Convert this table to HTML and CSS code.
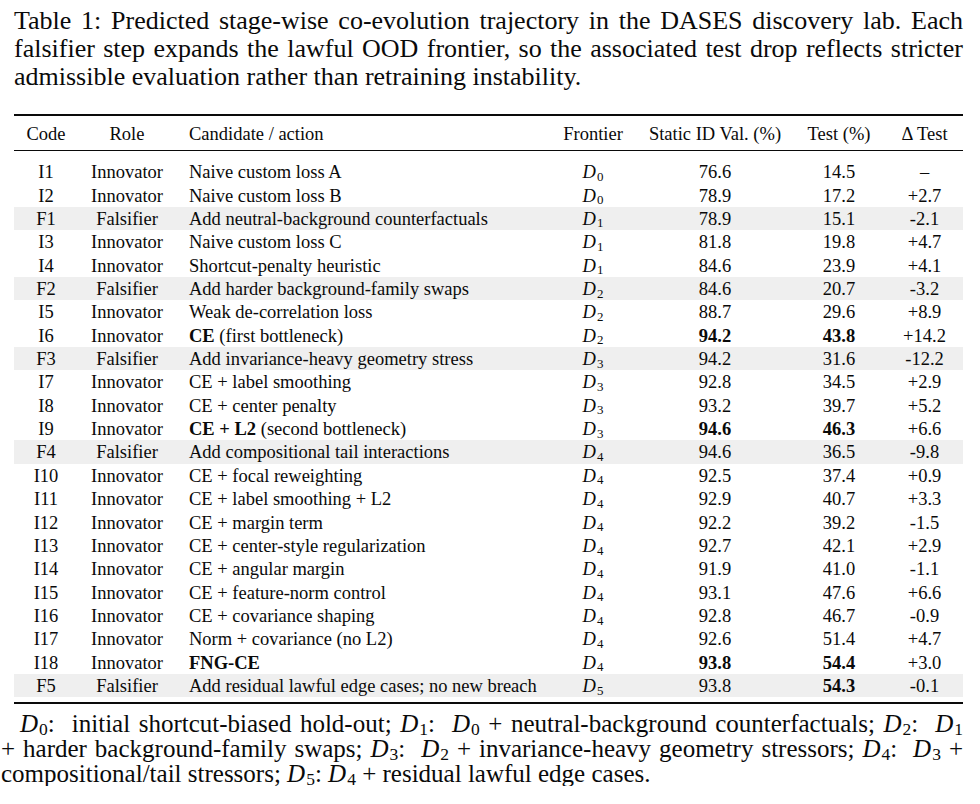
FILE: index.html
```html
<!DOCTYPE html>
<html>
<head>
<meta charset="utf-8">
<link rel="stylesheet" href="styles.css">
</head>
<body>
<p class="caption">Table 1: Predicted stage-wise co-evolution trajectory in the DASES discovery lab. Each falsifier step expands the lawful OOD frontier, so the associated test drop reflects stricter admissible evaluation rather than retraining instability.</p>
<table class="traj">
<colgroup>
<col class="c-code"><col class="c-role"><col class="c-cand"><col class="c-front"><col class="c-val"><col class="c-test"><col class="c-delta">
</colgroup>
<thead>
<tr><th>Code</th><th>Role</th><th class="l">Candidate / action</th><th>Frontier</th><th>Static ID Val. (%)</th><th>Test (%)</th><th>&Delta; Test</th></tr>
</thead>
<tbody>
<tr class="sp-top"><td colspan="7"></td></tr>
<tr><td>I1</td><td>Innovator</td><td class="l">Naive custom loss A</td><td><i>D</i><sub>0</sub></td><td>76.6</td><td>14.5</td><td>–</td></tr>
<tr><td>I2</td><td>Innovator</td><td class="l">Naive custom loss B</td><td><i>D</i><sub>0</sub></td><td>78.9</td><td>17.2</td><td>+2.7</td></tr>
<tr class="f"><td>F1</td><td>Falsifier</td><td class="l">Add neutral-background counterfactuals</td><td><i>D</i><sub>1</sub></td><td>78.9</td><td>15.1</td><td>-2.1</td></tr>
<tr><td>I3</td><td>Innovator</td><td class="l">Naive custom loss C</td><td><i>D</i><sub>1</sub></td><td>81.8</td><td>19.8</td><td>+4.7</td></tr>
<tr><td>I4</td><td>Innovator</td><td class="l">Shortcut-penalty heuristic</td><td><i>D</i><sub>1</sub></td><td>84.6</td><td>23.9</td><td>+4.1</td></tr>
<tr class="f"><td>F2</td><td>Falsifier</td><td class="l">Add harder background-family swaps</td><td><i>D</i><sub>2</sub></td><td>84.6</td><td>20.7</td><td>-3.2</td></tr>
<tr><td>I5</td><td>Innovator</td><td class="l">Weak de-correlation loss</td><td><i>D</i><sub>2</sub></td><td>88.7</td><td>29.6</td><td>+8.9</td></tr>
<tr><td>I6</td><td>Innovator</td><td class="l"><b>CE</b> (first bottleneck)</td><td><i>D</i><sub>2</sub></td><td><b>94.2</b></td><td><b>43.8</b></td><td>+14.2</td></tr>
<tr class="f"><td>F3</td><td>Falsifier</td><td class="l">Add invariance-heavy geometry stress</td><td><i>D</i><sub>3</sub></td><td>94.2</td><td>31.6</td><td>-12.2</td></tr>
<tr><td>I7</td><td>Innovator</td><td class="l">CE + label smoothing</td><td><i>D</i><sub>3</sub></td><td>92.8</td><td>34.5</td><td>+2.9</td></tr>
<tr><td>I8</td><td>Innovator</td><td class="l">CE + center penalty</td><td><i>D</i><sub>3</sub></td><td>93.2</td><td>39.7</td><td>+5.2</td></tr>
<tr><td>I9</td><td>Innovator</td><td class="l"><b>CE + L2</b> (second bottleneck)</td><td><i>D</i><sub>3</sub></td><td><b>94.6</b></td><td><b>46.3</b></td><td>+6.6</td></tr>
<tr class="f"><td>F4</td><td>Falsifier</td><td class="l">Add compositional tail interactions</td><td><i>D</i><sub>4</sub></td><td>94.6</td><td>36.5</td><td>-9.8</td></tr>
<tr><td>I10</td><td>Innovator</td><td class="l">CE + focal reweighting</td><td><i>D</i><sub>4</sub></td><td>92.5</td><td>37.4</td><td>+0.9</td></tr>
<tr><td>I11</td><td>Innovator</td><td class="l">CE + label smoothing + L2</td><td><i>D</i><sub>4</sub></td><td>92.9</td><td>40.7</td><td>+3.3</td></tr>
<tr><td>I12</td><td>Innovator</td><td class="l">CE + margin term</td><td><i>D</i><sub>4</sub></td><td>92.2</td><td>39.2</td><td>-1.5</td></tr>
<tr><td>I13</td><td>Innovator</td><td class="l">CE + center-style regularization</td><td><i>D</i><sub>4</sub></td><td>92.7</td><td>42.1</td><td>+2.9</td></tr>
<tr><td>I14</td><td>Innovator</td><td class="l">CE + angular margin</td><td><i>D</i><sub>4</sub></td><td>91.9</td><td>41.0</td><td>-1.1</td></tr>
<tr><td>I15</td><td>Innovator</td><td class="l">CE + feature-norm control</td><td><i>D</i><sub>4</sub></td><td>93.1</td><td>47.6</td><td>+6.6</td></tr>
<tr><td>I16</td><td>Innovator</td><td class="l">CE + covariance shaping</td><td><i>D</i><sub>4</sub></td><td>92.8</td><td>46.7</td><td>-0.9</td></tr>
<tr><td>I17</td><td>Innovator</td><td class="l">Norm + covariance (no L2)</td><td><i>D</i><sub>4</sub></td><td>92.6</td><td>51.4</td><td>+4.7</td></tr>
<tr><td>I18</td><td>Innovator</td><td class="l"><b>FNG-CE</b></td><td><i>D</i><sub>4</sub></td><td><b>93.8</b></td><td><b>54.4</b></td><td>+3.0</td></tr>
<tr class="f"><td>F5</td><td>Falsifier</td><td class="l">Add residual lawful edge cases; no new breach</td><td><i>D</i><sub>5</sub></td><td>93.8</td><td><b>54.3</b></td><td>-0.1</td></tr>
<tr class="sp-bot"><td colspan="7"></td></tr>
</tbody>
</table>
<p class="note"><i>D</i><sub>0</sub>:&nbsp; initial shortcut-biased hold-out; <i>D</i><sub>1</sub>:&nbsp; <i>D</i><sub>0</sub> + neutral-background counterfactuals; <i>D</i><sub>2</sub>:&nbsp; <i>D</i><sub>1</sub> +&nbsp;harder background-family swaps; <i>D</i><sub>3</sub>:&nbsp; <i>D</i><sub>2</sub> + invariance-heavy geometry stressors; <i>D</i><sub>4</sub>:&nbsp; <i>D</i><sub>3</sub>&nbsp;+ compositional/tail stressors; <i>D</i><sub>5</sub>: <i>D</i><sub>4</sub> + residual lawful edge cases.</p>
</body>
</html>
```
FILE: styles.css
```css
html, body {
  background: #ffffff;
}
body {
  margin: 0;
  padding: 7px 17px 0 14px;
  font-family: "Liberation Serif", "Times New Roman", serif;
  color: #0a0a0a;
}
.caption {
  margin: 0;
  font-size: 26px;
  line-height: 28px;
  text-align: justify;
}
.traj {
  margin-top: 22.5px;
  width: 949px;
  table-layout: fixed;
  border-collapse: separate;
  border-spacing: 0;
  font-size: 18.5px;
}
.c-code { width: 64px; }
.c-role { width: 98px; }
.c-cand { width: 372px; }
.c-front { width: 90px; }
.c-val { width: 154px; }
.c-test { width: 94px; }
.c-delta { width: 77px; }
.traj thead tr {
  height: 37px;
}
.traj th {
  font-weight: normal;
  padding: 3px 0 0 0;
  line-height: 21px;
  border-top: 2px solid #0a0a0a;
  border-bottom: 1px solid #0a0a0a;
  text-align: center;
  vertical-align: middle;
  white-space: nowrap;
}
.traj tbody tr {
  height: 23.36px;
}
.traj td {
  padding: 2px 0 0 0;
  line-height: 21px;
  text-align: center;
  vertical-align: middle;
  white-space: nowrap;
}
.traj .l {
  text-align: left;
  padding-left: 13px;
}
.traj tr.f td {
  background: #efefef;
}
.traj tr.sp-top {
  height: 9.5px;
}
.traj tr.sp-top td {
  padding: 0;
  height: 9.5px;
  line-height: 0;
}
.traj tr.sp-bot {
  height: 4.4px;
}
.traj tr.sp-bot td {
  padding: 0;
  height: 4.4px;
  line-height: 0;
  border-bottom: 2px solid #0a0a0a;
}
.traj i, .note i {
  font-style: italic;
}
sub {
  font-size: 0.7em;
  vertical-align: -0.2em;
  line-height: 0;
  margin-left: 1px;
}
.traj b {
  font-weight: bold;
}
.note {
  margin: 7px 0 0 -13px;
  width: 962px;
  font-size: 25px;
  line-height: 25px;
  text-align: justify;
  text-indent: 19px;
}
```
